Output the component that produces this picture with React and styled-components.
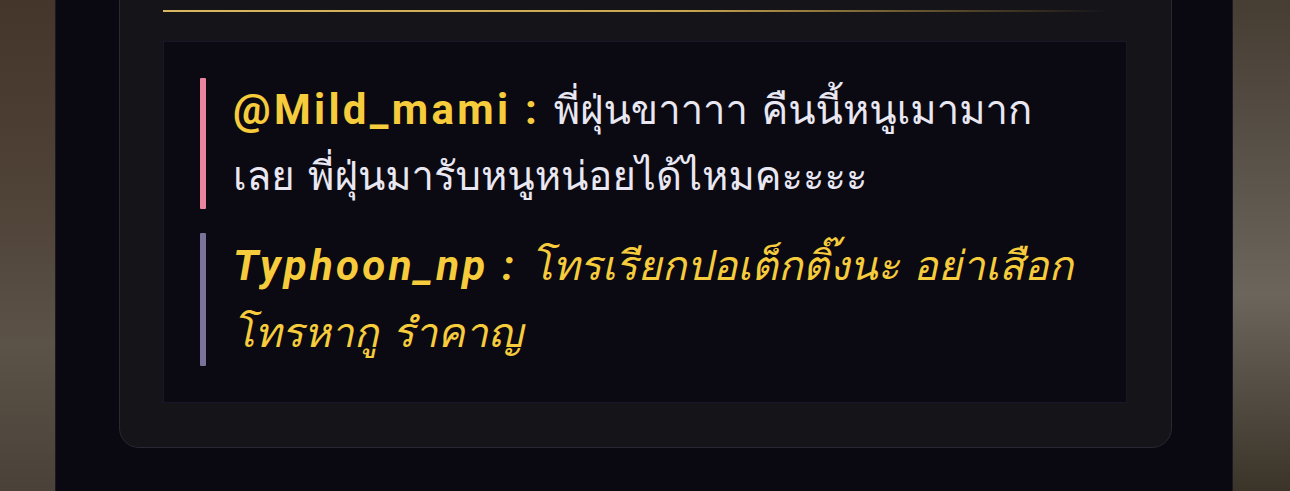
import React from "react";
import styled, { createGlobalStyle } from "styled-components";

const Global = createGlobalStyle`
  html, body { margin: 0; padding: 0; height: 100%; background: #0a0811; }
  #root { height: 100%; }
  * { box-sizing: border-box; }
`;

const Page = styled.div`
  display: grid;
  grid-template-columns: 56px minmax(0, 1fr) 58px;
  width: 1290px;
  height: 491px;
  overflow: hidden;
`;

const Backdrop = styled.div`
  background: ${(p) =>
    p.$side === "left"
      ? "linear-gradient(180deg, #45362b 0%, #4f4237 40%, #5b5248 70%, #4a4238 100%)"
      : "linear-gradient(180deg, #463d33 0%, #5e574d 40%, #6b655c 60%, #3b3429 100%)"};
  border-${(p) => (p.$side === "left" ? "right" : "left")}: 1px solid #1c1826;
`;

const Stage = styled.main`
  background: #0a0811;
  padding: 0 60px 0 63px;
`;

const Card = styled.section`
  margin-top: -40px;
  height: 488px;
  background: #151419;
  border: 1px solid #2a2832;
  border-radius: 0 0 20px 20px;
  padding: 49px 44px 44px 43px;
  display: flex;
  flex-direction: column;
  gap: 29px;
`;

const GoldRule = styled.div`
  flex: none;
  height: 2px;
  margin-right: 18px;
  background: linear-gradient(
    90deg,
    #d8b760 0%,
    #c9a650 55%,
    rgba(160, 130, 60, 0.35) 88%,
    rgba(160, 130, 60, 0) 100%
  );
`;

const ChatBox = styled.div`
  flex: 1;
  min-height: 0;
  background: #0b0a12;
  border: 1px solid #17162a;
  padding: 36px;
  display: flex;
  flex-direction: column;
  gap: 24px;
`;

const Quote = styled.div`
  display: flex;
  gap: 27px;
`;

const Bar = styled.div`
  width: 6px;
  flex: none;
  background: ${(p) => p.$color};
  border-radius: 1px;
`;

const Line = styled.p`
  margin: 0;
  flex: 1;
  min-width: 0;
  font-family: Loma, "Noto Sans", sans-serif;
  font-size: ${(p) => (p.$italic ? "41px" : "40px")};
  line-height: ${(p) => (p.$italic ? "66.5px" : "65.5px")};
  color: ${(p) => (p.$gold ? "#f6cc3d" : "#e9e7f2")};
  font-style: ${(p) => (p.$italic ? "italic" : "normal")};
`;

const Handle = styled.span`
  font-family: Roboto, "Noto Sans", sans-serif;
  font-size: 42px;
  line-height: 1;
  font-weight: 700;
  color: #f6cc3d;
  letter-spacing: 3.3px;
`;

export default function App() {
  return (
    <>
      <Global />
      <Page>
        <Backdrop $side="left" />
        <Stage>
          <Card>
            <GoldRule />
            <ChatBox>
              <Quote>
                <Bar $color="#e9849f" />
                <Line>
                  <Handle>@Mild_mami :</Handle> พี่ฝุ่นขาาาา คืนนี้หนูเมามาก เลย พี่ฝุ่นมารับหนูหน่อยได้ไหมคะะะะ
                </Line>
              </Quote>
              <Quote>
                <Bar $color="#7a7299" />
                <Line $gold $italic>
                  <Handle>Typhoon_np :</Handle>  โทรเรียกปอเต็กติ๊งนะ อย่าเสือก โทรหากู รำคาญ
                </Line>
              </Quote>
            </ChatBox>
          </Card>
        </Stage>
        <Backdrop $side="right" />
      </Page>
    </>
  );
}
